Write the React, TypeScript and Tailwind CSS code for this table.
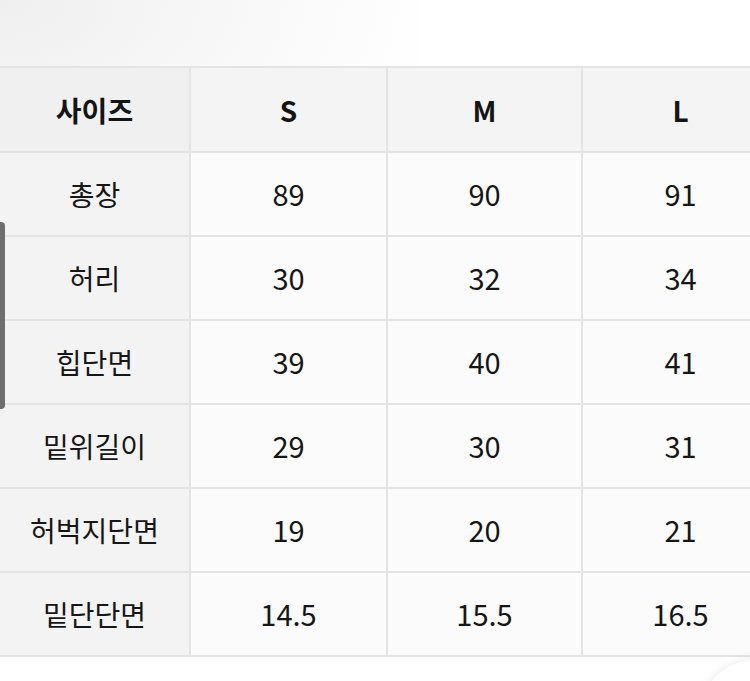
import React from "react";

const rows: [string, string, string, string][] = [
  ["총장", "89", "90", "91"],
  ["허리", "30", "32", "34"],
  ["힙단면", "39", "40", "41"],
  ["밑위길이", "29", "30", "31"],
  ["허벅지단면", "19", "20", "21"],
  ["밑단단면", "14.5", "15.5", "16.5"],
];

const font = {
  fontFamily:
    '"Noto Sans CJK KR", "Noto Sans", "Liberation Sans", sans-serif',
};

export default function App() {
  return (
    <div
      className="relative w-[750px] h-[681px] overflow-hidden bg-white"
      style={font}
    >
      <div className="absolute left-0 top-0 w-[420px] h-[240px] bg-[radial-gradient(ellipse_at_top_left,_#efefef_0%,_#f9f9f9_45%,_rgba(255,255,255,0)_75%)]" />
      <div className="relative pt-[66px]">
        <div className="w-[778px] border-t-2 border-b-2 border-[#e4e4e4] bg-[#e4e4e4] grid grid-cols-[189px_195px_193px_195px] gap-[2px]">
          <div className="h-[83px] bg-[#f0f0f0] flex items-center justify-center text-[28px] font-bold text-[#141414]">
            사이즈
          </div>
          {["S", "M", "L"].map((s) => (
            <div
              key={s}
              className="h-[83px] bg-[#f4f4f4] flex items-center justify-center text-[28px] font-bold text-[#141414]"
            >
              {s}
            </div>
          ))}
          {rows.map((r) => (
            <React.Fragment key={r[0]}>
              <div className="h-[82px] bg-[#f3f3f3] flex items-center justify-center text-[28px] text-[#161616]">
                {r[0]}
              </div>
              {r.slice(1).map((v, i) => (
                <div
                  key={i}
                  className="h-[82px] bg-[#fbfbfb] flex items-center justify-center text-[29px] text-[#161616]"
                >
                  {v}
                </div>
              ))}
            </React.Fragment>
          ))}
        </div>
      </div>
      <div className="absolute left-0 top-[222px] w-[5px] h-[187px] bg-[#6e6e6e] rounded-r-[4px]" />
      <div className="absolute left-[700px] top-[660px] w-[110px] h-[110px] rounded-full bg-white shadow-[0_0_8px_rgba(0,0,0,0.1)]" />
    </div>
  );
}
